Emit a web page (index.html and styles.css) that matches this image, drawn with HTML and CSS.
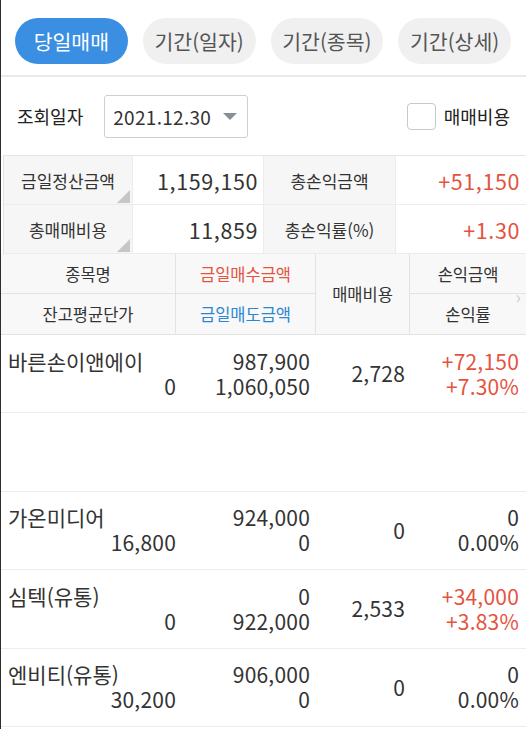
FILE: index.html
```html
<!DOCTYPE html>
<html lang="ko">
<head>
    <meta charset="UTF-8">
    <meta name="viewport" content="width=device-width, initial-scale=1.0">
    <title>당일매매</title>
    <link rel="stylesheet" href="styles.css">
</head>
<body>

<div class="tabs">
    <button class="tab active">당일매매</button>
    <button class="tab">기간(일자)</button>
    <button class="tab">기간(종목)</button>
    <button class="tab">기간(상세)</button>
</div>

<div class="filter">
    <span class="filter-label">조회일자</span>
    <div class="date-box">
        <span>2021.12.30</span>
        <span class="caret"></span>
    </div>
    <label class="check">
        <span class="check-box"></span>
        <span>매매비용</span>
    </label>
</div>

<div class="summary">
    <div class="sum-label corner">금일정산금액</div>
    <div class="sum-value">1,159,150</div>
    <div class="sum-label">총손익금액</div>
    <div class="sum-value up">+51,150</div>
    <div class="sum-label corner">총매매비용</div>
    <div class="sum-value">11,859</div>
    <div class="sum-label">총손익률(%)</div>
    <div class="sum-value up">+1.30</div>
</div>

<div class="list-head">
    <div class="head-cell">종목명</div>
    <div class="head-cell up">금일매수금액</div>
    <div class="head-cell span">매매비용</div>
    <div class="head-cell last">손익금액</div>
    <div class="head-cell">잔고평균단가</div>
    <div class="head-cell down">금일매도금액</div>
    <div class="head-cell last">손익률</div>
    <span class="more">&#8250;</span>
</div>

<div class="list">
    <div class="row">
        <div class="cell name"><span class="stock">바른손이앤에이</span><span>0</span></div>
        <div class="cell"><span>987,900</span><span>1,060,050</span></div>
        <div class="cell mid">2,728</div>
        <div class="cell up"><span>+72,150</span><span>+7.30%</span></div>
    </div>
    <div class="row empty"></div>
    <div class="row">
        <div class="cell name"><span class="stock">가온미디어</span><span>16,800</span></div>
        <div class="cell"><span>924,000</span><span>0</span></div>
        <div class="cell mid">0</div>
        <div class="cell"><span>0</span><span>0.00%</span></div>
    </div>
    <div class="row">
        <div class="cell name"><span class="stock">심텍(유통)</span><span>0</span></div>
        <div class="cell"><span>0</span><span>922,000</span></div>
        <div class="cell mid">2,533</div>
        <div class="cell up"><span>+34,000</span><span>+3.83%</span></div>
    </div>
    <div class="row">
        <div class="cell name"><span class="stock">엔비티(유통)</span><span>30,200</span></div>
        <div class="cell"><span>906,000</span><span>0</span></div>
        <div class="cell mid">0</div>
        <div class="cell"><span>0</span><span>0.00%</span></div>
    </div>
</div>

</body>
</html>
```

FILE: styles.css
```css
body {
    font-family: "Noto Sans CJK KR", "Noto Sans", sans-serif;
    font-variant-numeric: tabular-nums;
    background-color: #fff;
    color: #333;
    margin: 0;
    padding: 0;
    border-left: 1px solid #2e2e2e;
    min-height: 729px;
    box-sizing: border-box;
}

.tabs {
    display: flex;
    gap: 15px;
    padding: 18px 15px 11px 14px;
    border-bottom: 2px solid #e9e9e9;
}

.tab {
    width: 113px;
    height: 46px;
    border: none;
    border-radius: 23px;
    background-color: #f0f0f0;
    color: #555;
    font-family: inherit;
    font-size: 20.5px;
    padding: 0;
}

.tab.active {
    background-color: #3b8fe3;
    color: #fff;
}

.filter {
    display: flex;
    align-items: center;
    height: 78px;
    padding: 0 16px 0 16px;
}

.filter-label {
    font-size: 18px;
    color: #222;
    margin-right: 21px;
}

.date-box {
    display: flex;
    align-items: center;
    justify-content: space-between;
    width: 144px;
    height: 43px;
    box-sizing: border-box;
    padding: 0 10px 0 8px;
    border: 1px solid #cfcfcf;
    border-radius: 3px;
    font-size: 19px;
    letter-spacing: 0.3px;
    color: #333;
}

.caret {
    width: 0;
    height: 0;
    border-left: 7px solid transparent;
    border-right: 7px solid transparent;
    border-top: 7px solid #8a8f96;
}

.check {
    display: flex;
    align-items: center;
    gap: 8px;
    margin-left: auto;
    font-size: 18px;
    color: #222;
}

.check-box {
    width: 29px;
    height: 27px;
    box-sizing: border-box;
    border: 1px solid #c8c8c8;
    border-radius: 4px;
}

.summary {
    display: grid;
    grid-template-columns: 129px 131px 132px 1fr;
    grid-auto-rows: 49px;
    margin-left: 2px;
    border-top: 1px solid #e6e6e6;
    border-left: 1px solid #e0e0e0;
}

.sum-label,
.sum-value {
    display: flex;
    align-items: center;
    border-right: 1px solid #ececec;
    border-bottom: 1px solid #ececec;
}

.sum-label {
    position: relative;
    justify-content: center;
    background-color: #f6f6f6;
    font-size: 17px;
    color: #333;
}

.sum-label.corner::after {
    content: "";
    position: absolute;
    right: 2px;
    bottom: 1px;
    border-left: 13px solid transparent;
    border-bottom: 13px solid #c6c6c6;
}

.sum-value {
    justify-content: flex-end;
    padding-right: 5px;
    font-size: 21.5px;
    letter-spacing: 0.6px;
    color: #333;
}

.summary .sum-value:nth-child(4n) {
    border-right: none;
    padding-right: 6px;
}

.list-head {
    position: relative;
    display: grid;
    grid-template-columns: 175px 140px 94px 1fr;
    grid-template-rows: 40px 40px;
    background-color: #f8f8f8;
    border-bottom: 1px solid #e3e3e3;
}

.head-cell {
    display: flex;
    align-items: center;
    justify-content: center;
    font-size: 16.5px;
    color: #333;
    border-right: 1px solid #e3e3e3;
}

.head-cell:nth-child(-n+4) {
    border-bottom: 1px solid #e3e3e3;
}

.head-cell.span {
    grid-row: span 2;
    border-bottom: none;
}

.head-cell.last {
    border-right: none;
}

.up {
    color: #e5533f !important;
}

.down {
    color: #2b87d1 !important;
}

.more {
    position: absolute;
    right: 5px;
    top: 29px;
    font-size: 18px;
    color: #cfcfcf;
}

.row {
    display: grid;
    grid-template-columns: 175px 140px 94px 1fr;
    height: 78.4px;
    box-sizing: border-box;
    border-bottom: 1px solid #ededed;
}

.cell {
    display: flex;
    flex-direction: column;
    justify-content: center;
    align-items: flex-end;
    padding-right: 6px;
    font-size: 21px;
    letter-spacing: 0.2px;
    line-height: 25px;
    color: #333;
}

.cell.name {
    padding-right: 0;
    padding-left: 7px;
}

.cell .stock {
    align-self: flex-start;
    font-size: 21px;
    letter-spacing: 0;
}

.cell.mid {
    padding-right: 5px;
}

.cell:last-child {
    padding-right: 7px;
}
```
